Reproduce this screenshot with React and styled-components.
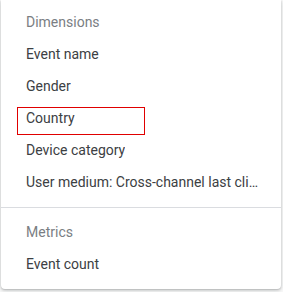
import styled, { createGlobalStyle } from "styled-components";

const Global = createGlobalStyle`
    body{
        margin:0;
        background:#fff;
        font-family: Roboto, "Liberation Sans", Arial, sans-serif;
    }
`
const Page = styled.div`
    width:283px;
    height:292px;
    overflow:hidden;
    position:relative;
`
const Menu = styled.div`
    width:280px;
    margin-left:1px;
    padding:6px 0 9px;
    background:#fff;
    border-radius:0 0 4px 4px;
    box-shadow: 0 1px 2px rgba(60,64,67,.3), 0 2px 6px 2px rgba(60,64,67,.15);
    box-sizing:border-box;
`
const Section = styled.div`
    display:flex;
    flex-direction:column;
`
const Row = styled.div`
    height:32px;
    display:flex;
    align-items:center;
    padding:0 21px 0 25px;
    font-size:14px;
    color:${p => p.$header ? "#7a7e83" : "#3c4043"};
    white-space:nowrap;
    position:relative;
    span{
        min-width:0;
        overflow:hidden;
        text-overflow:ellipsis;
    }
`
const Focus = styled.div`
    position:absolute;
    left:16px;
    top:5px;
    width:128px;
    height:28px;
    box-sizing:border-box;
    border:1px solid #e00000;
`
const Divider = styled.hr`
    border:0;
    border-top:1px solid #dadce0;
    margin:9px 0 8px;
`

const dims = ["Event name", "Gender", "Country", "Device category", "User medium: Cross-channel last click"]

export default function App() {
    return (
        <Page>
            <Global />
            <Menu>
                <Section>
                    <Row $header>Dimensions</Row>
                    {dims.map(d => (
                        <Row key={d}>
                            {d === "Country" && <Focus />}
                            <span>{d}</span>
                        </Row>
                    ))}
                </Section>
                <Divider />
                <Section>
                    <Row $header>Metrics</Row>
                    <Row>Event count</Row>
                </Section>
            </Menu>
        </Page>
    )
}
